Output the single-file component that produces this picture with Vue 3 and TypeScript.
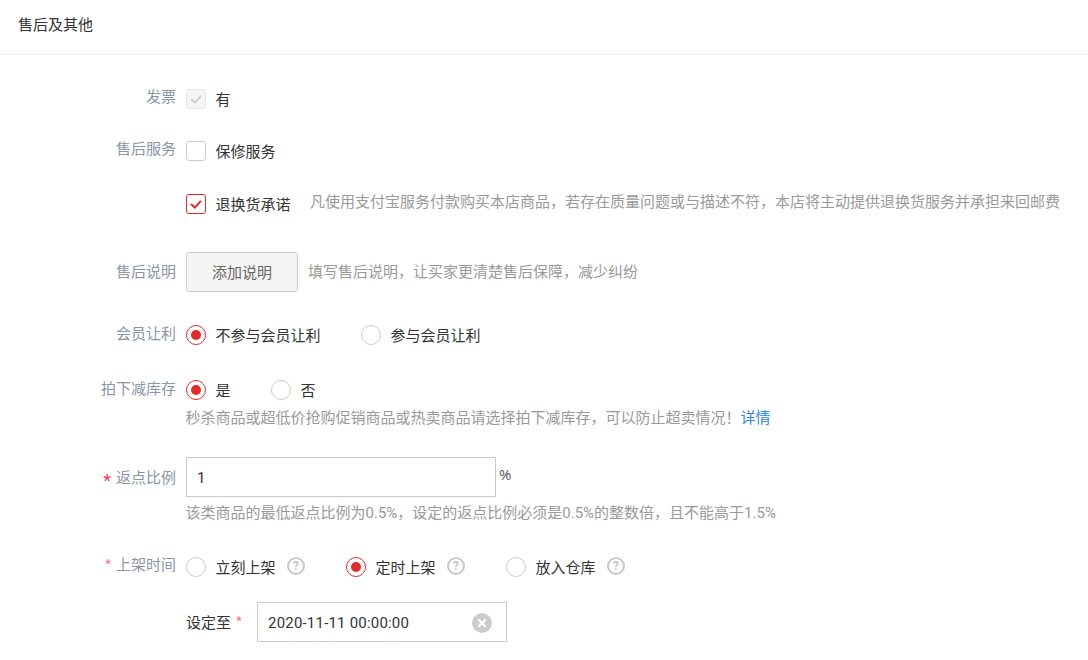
<script setup lang="ts">
const check = 'M5 10 L8.8 13.6 L15 6.8'
</script>

<template>
  <div class="page">
    <header class="head">售后及其他</header>
    <div class="form">
      <div class="row r-invoice">
        <div class="label">发票</div>
        <div class="ctrl">
          <label class="opt">
            <span class="box disabled">
              <svg width="20" height="20" viewBox="0 0 20 20"><path :d="check" fill="none" stroke="#cfcfcf" stroke-width="2" /></svg>
            </span>
            <span class="text">有</span>
          </label>
        </div>
      </div>
      <div class="row r-service">
        <div class="label">售后服务</div>
        <div class="ctrl">
          <label class="opt">
            <span class="box"></span>
            <span class="text">保修服务</span>
          </label>
        </div>
      </div>
      <div class="row r-return">
        <div class="label"></div>
        <div class="ctrl">
          <label class="opt">
            <span class="box on">
              <svg width="20" height="20" viewBox="0 0 20 20"><path :d="check" fill="none" stroke="#e02b2b" stroke-width="2" /></svg>
            </span>
            <span class="text">退换货承诺</span>
          </label>
          <span class="hint inline-return">凡使用支付宝服务付款购买本店商品，若存在质量问题或与描述不符，本店将主动提供退换货服务并承担来回邮费</span>
        </div>
      </div>
      <div class="row r-note">
        <div class="label">售后说明</div>
        <div class="ctrl">
          <button class="btn" type="button">添加说明</button>
          <span class="hint inline-note">填写售后说明，让买家更清楚售后保障，减少纠纷</span>
        </div>
      </div>
      <div class="row r-member">
        <div class="label">会员让利</div>
        <div class="ctrl">
          <label class="opt gap40">
            <span class="radio on"></span>
            <span class="text">不参与会员让利</span>
          </label>
          <label class="opt">
            <span class="radio"></span>
            <span class="text">参与会员让利</span>
          </label>
        </div>
      </div>
      <div class="row r-stock">
        <div class="label">拍下减库存</div>
        <div class="ctrl column">
          <div class="line">
            <label class="opt gap40">
              <span class="radio on"></span>
              <span class="text">是</span>
            </label>
            <label class="opt">
              <span class="radio"></span>
              <span class="text">否</span>
            </label>
          </div>
          <div class="hint below-stock">秒杀商品或超低价抢购促销商品或热卖商品请选择拍下减库存，可以防止超卖情况！<a class="link">详情</a></div>
        </div>
      </div>
      <div class="row r-rebate">
        <div class="label"><i class="star big">*</i>返点比例</div>
        <div class="ctrl column">
          <div class="line top">
            <div class="input rebate">1</div>
            <span class="unit">%</span>
          </div>
          <div class="hint below-rebate">该类商品的最低返点比例为0.5%，设定的返点比例必须是0.5%的整数倍，且不能高于1.5%</div>
        </div>
      </div>
      <div class="row r-time">
        <div class="label"><i class="star light">*</i>上架时间</div>
        <div class="ctrl">
          <label class="opt">
            <span class="radio"></span>
            <span class="text">立刻上架</span>
            <span class="help">?</span>
          </label>
          <label class="opt">
            <span class="radio on"></span>
            <span class="text">定时上架</span>
            <span class="help">?</span>
          </label>
          <label class="opt">
            <span class="radio"></span>
            <span class="text">放入仓库</span>
            <span class="help">?</span>
          </label>
        </div>
      </div>
      <div class="row r-set">
        <div class="label"></div>
        <div class="ctrl">
          <span class="set-label">设定至<i class="star light after">*</i></span>
          <div class="input date">
            <span class="date-value">2020-11-11 00:00:00</span>
            <svg class="clear" width="20" height="20" viewBox="0 0 20 20">
              <circle cx="10" cy="10" r="10" fill="#cccccc" />
              <path d="M6.3 6.3 L13.7 13.7 M13.7 6.3 L6.3 13.7" stroke="#fff" stroke-width="2.2" />
            </svg>
          </div>
        </div>
      </div>
    </div>
  </div>
</template>

<style>
html, body { margin: 0; background: #fff; overflow: hidden; }
</style>

<style scoped>
.page {
  width: 1088px;
  height: 660px;
  overflow: hidden;
  font-family: Roboto, "Noto Sans CJK SC", sans-serif;
  font-size: 15px;
  color: #333;
  background: #fff;
}
.head {
  height: 54px;
  line-height: 50px;
  padding-left: 18px;
  border-bottom: 1px solid #eeeeee;
  color: #333;
}
.form { display: flex; flex-direction: column; }
.row { display: flex; align-items: flex-start; }
.label {
  width: 176px;
  flex: none;
  text-align: right;
  color: #8c95a6;
  line-height: 20px;
}
.ctrl {
  margin-left: 10px;
  display: flex;
  align-items: center;
  min-width: 0;
}
.column { flex-direction: column; align-items: flex-start; }
.line { display: flex; align-items: center; }
.line.top { align-items: flex-start; }
.opt { display: inline-flex; align-items: center; height: 20px; }
.gap40 { margin-right: 40.5px; }
.text { margin: 2px 0 0 9.5px; color: #333; line-height: 20px; }
.box {
  width: 20px;
  height: 20px;
  box-sizing: border-box;
  border: 1px solid #cccccc;
  border-radius: 3px;
  background: #fff;
  position: relative;
  flex: none;
}
.box svg { position: absolute; left: -1px; top: -1px; }
.box.disabled { background: #f5f5f5; border-color: #e6e6e6; }
.box.on { border-color: #e02b2b; }
.radio {
  width: 20px;
  height: 20px;
  box-sizing: border-box;
  border: 1px solid #cccccc;
  border-radius: 50%;
  background: #fff;
  flex: none;
  display: flex;
  align-items: center;
  justify-content: center;
}
.radio.on { border-color: #e02b2b; }
.radio.on::after {
  content: "";
  width: 10px;
  height: 10px;
  border-radius: 50%;
  background: #e02b2b;
}
.hint { color: #999; line-height: 20px; }
.btn {
  width: 112px;
  height: 40px;
  box-sizing: border-box;
  border: 1px solid #cccccc;
  border-radius: 3px;
  background: #f5f5f5;
  color: #666;
  font: inherit;
  padding: 0 0 2px;
}
.input {
  box-sizing: border-box;
  height: 40px;
  border: 1px solid #cccccc;
  line-height: 40px;
  color: #333;
  background: #fff;
}
.rebate { width: 310px; padding-left: 10px; }
.unit { margin-left: 3px; line-height: 34px; height: 34px; color: #555; font-family: "Open Sans", sans-serif; }
.date {
  width: 250px;
  padding: 0 14px 0 10px;
  display: flex;
  align-items: center;
  justify-content: space-between;
}
.date-value { letter-spacing: 0.2px; margin-top: 2px; line-height: 20px; }
.clear { margin-top: 2px; }
.star {
  font-style: normal;
  color: #f0304a;
  margin-right: 5px;
  font-family: "Liberation Sans", sans-serif;
}
.star.big { font-size: 20px; line-height: 16px; vertical-align: -5px; }
.star.light { color: #f3666f; line-height: 16px; vertical-align: 1px; }
.star.after { margin: 0 0 0 5px; vertical-align: 2px; }
.set-label { width: 71px; color: #333; flex: none; line-height: 20px; margin-top: 2px; }
.help {
  width: 18px;
  height: 18px;
  box-sizing: border-box;
  border: 2px solid #c8c8c8;
  border-radius: 50%;
  margin-left: 11.5px;
  margin-right: 41px;
  margin-top: -3px;
  font-size: 12px;
  font-weight: 600;
  line-height: 14px;
  text-align: center;
  color: #bdbdbd;
}
.opt:last-child .help { margin-right: 0; }
.link { color: #2b85e4; }

.r-invoice { margin-top: 34px; }
.r-invoice .label { margin-top: -2px; }
.r-service { margin-top: 32px; }
.r-service .label { margin-top: -2px; }
.r-return { margin-top: 33px; }
.inline-return { margin-left: 19.5px; margin-top: -5px; white-space: nowrap; }
.r-note { margin-top: 38px; }
.r-note .label { margin-top: 10px; }
.inline-note { margin-left: 10px; }
.r-member { margin-top: 33px; }
.r-member .label { margin-top: -1px; }
.r-stock { margin-top: 35px; }
.r-stock .label { margin-top: -1px; }
.below-stock { margin: 8px 0 0 -0.5px; }
.r-rebate { margin-top: 29px; }
.r-rebate .label { margin-top: 11px; }
.below-rebate { margin: 6px 0 0 -0.5px; }
.r-time { margin-top: 34px; }
.r-time .label { margin-top: -2px; }
.r-set { margin-top: 25px; }
</style>
